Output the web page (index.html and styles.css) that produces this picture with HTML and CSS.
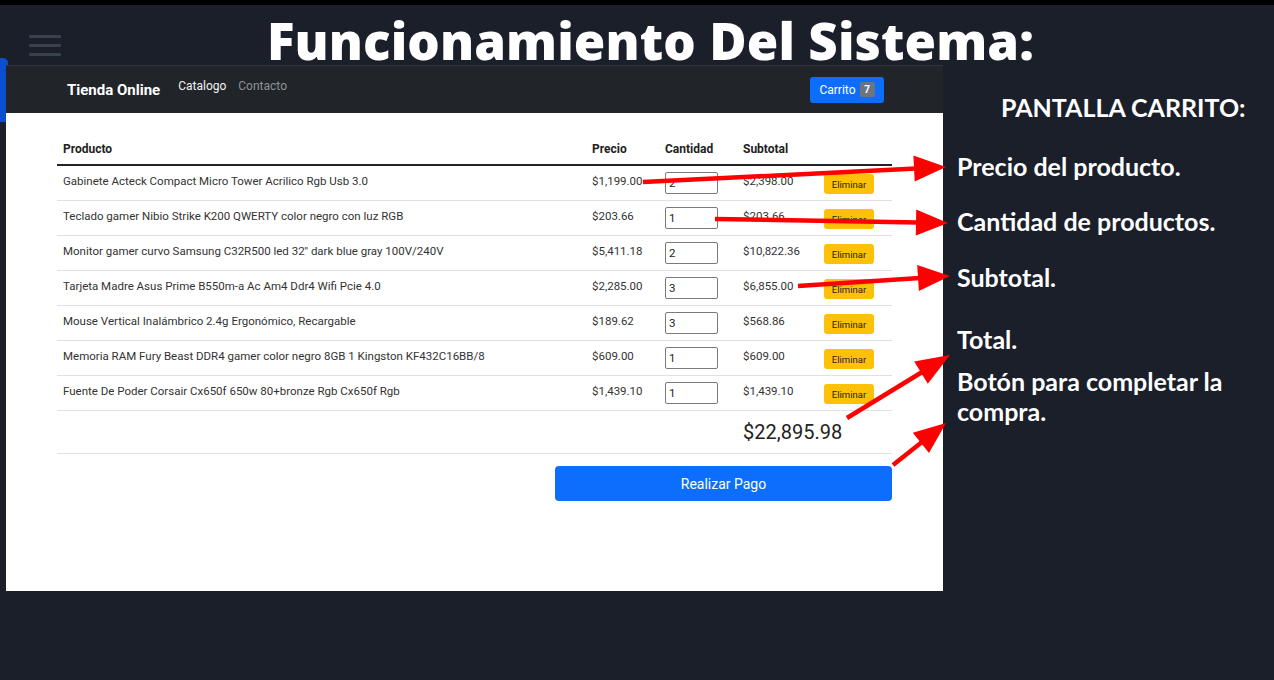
FILE: index.html
```html
<!DOCTYPE html>
<html lang="es">
<head>
<meta charset="utf-8">
<title>Funcionamiento Del Sistema</title>
<link rel="stylesheet" href="styles.css">
</head>
<body>
<div class="stage">
  <div class="topbar"></div>
  <header class="hero">
    <div class="burger"><span></span><span></span><span></span></div>
    <h1 class="title">Funcionamiento Del Sistema:</h1>
  </header>
  <div class="main">
    <div class="window">
      <nav class="nav">
        <span class="brand">Tienda Online</span>
        <div class="links">
          <span class="link active">Catalogo</span>
          <span class="link">Contacto</span>
        </div>
        <button class="cart-btn">Carrito <span class="badge">7</span></button>
      </nav>
      <div class="content">
        <table class="cart">
          <colgroup>
            <col class="col-prod"><col class="col-price"><col class="col-qty"><col class="col-sub"><col class="col-act">
          </colgroup>
          <thead>
            <tr><th>Producto</th><th>Precio</th><th>Cantidad</th><th>Subtotal</th><th></th></tr>
          </thead>
          <tbody>
            <tr><td>Gabinete Acteck Compact Micro Tower Acrilico Rgb Usb 3.0</td><td>$1,199.00</td><td><input class="qty" value="2"></td><td>$2,398.00</td><td><button class="del">Eliminar</button></td></tr>
            <tr><td>Teclado gamer Nibio Strike K200 QWERTY color negro con luz RGB</td><td>$203.66</td><td><input class="qty" value="1"></td><td>$203.66</td><td><button class="del">Eliminar</button></td></tr>
            <tr><td>Monitor gamer curvo Samsung C32R500 led 32'' dark blue gray 100V/240V</td><td>$5,411.18</td><td><input class="qty" value="2"></td><td>$10,822.36</td><td><button class="del">Eliminar</button></td></tr>
            <tr><td>Tarjeta Madre Asus Prime B550m-a Ac Am4 Ddr4 Wifi Pcie 4.0</td><td>$2,285.00</td><td><input class="qty" value="3"></td><td>$6,855.00</td><td><button class="del">Eliminar</button></td></tr>
            <tr><td>Mouse Vertical Inalámbrico 2.4g Ergonómico, Recargable</td><td>$189.62</td><td><input class="qty" value="3"></td><td>$568.86</td><td><button class="del">Eliminar</button></td></tr>
            <tr><td>Memoria RAM Fury Beast DDR4 gamer color negro 8GB 1 Kingston KF432C16BB/8</td><td>$609.00</td><td><input class="qty" value="1"></td><td>$609.00</td><td><button class="del">Eliminar</button></td></tr>
            <tr><td>Fuente De Poder Corsair Cx650f 650w 80+bronze Rgb Cx650f Rgb</td><td>$1,439.10</td><td><input class="qty" value="1"></td><td>$1,439.10</td><td><button class="del">Eliminar</button></td></tr>
            <tr class="total-row"><td colspan="3"></td><td colspan="2" class="total">$22,895.98</td></tr>
          </tbody>
        </table>
        <div class="pay-row"><button class="pay">Realizar Pago</button></div>
      </div>
    </div>
    <aside class="notes">
      <h2 class="notes-title">PANTALLA CARRITO:</h2>
      <p class="note n-precio">Precio del producto.</p>
      <p class="note n-cant">Cantidad de productos.</p>
      <p class="note n-sub">Subtotal.</p>
      <p class="note n-total">Total.</p>
      <p class="note n-btn">Botón para completar la compra.</p>
    </aside>
  </div>
  <div class="blue-tab"></div>
  <svg class="arrows" width="1274" height="680" viewBox="0 0 1274 680">
    <g fill="#ff0000" stroke="#ff0000">
      <line x1="643" y1="182" x2="916" y2="168.6" stroke-width="4.5"/>
      <polygon points="946,167 914.7,181.6 913.4,155.6" stroke="none"/>
      <line x1="715" y1="219" x2="918" y2="222.4" stroke-width="4.5"/>
      <polygon points="948,223 915.8,235.4 916.2,209.5" stroke="none"/>
      <line x1="798" y1="286" x2="920" y2="278" stroke-width="4.5"/>
      <polygon points="950,276 918.9,291.1 917.2,265.1" stroke="none"/>
      <line x1="847" y1="418" x2="923" y2="371.5" stroke-width="4.5"/>
      <polygon points="950,355 927.8,383.8 914.2,361.6" stroke="none"/>
      <line x1="893" y1="465" x2="922" y2="442" stroke-width="4.5"/>
      <polygon points="946,423 929,453.1 912.8,432.7" stroke="none"/>
    </g>
  </svg>
</div>
</body>
</html>
```
FILE: styles.css
```css
* { box-sizing: border-box; }
html, body { margin: 0; padding: 0; }
body {
  background: #1b1f2a;
  width: 1274px;
  height: 680px;
  overflow: hidden;
}
.stage {
  position: relative;
  width: 1274px;
  height: 680px;
  background: #1b1f2a;
}
.topbar { height: 5px; background: #000; }
.hero {
  height: 60px;
  display: flex;
  align-items: flex-start;
}
.burger {
  width: 32px;
  margin-left: 29px;
  padding-top: 30px;
  display: flex;
  flex-direction: column;
  gap: 6.5px;
}
.burger span {
  display: block;
  height: 2.5px;
  background: #394050;
  border-radius: 1px;
}
.title {
  flex: 1;
  margin: 0 34px 0 0;
  padding-top: 10px;
  line-height: 50px;
  text-align: center;
  color: #fff;
  font-family: "Open Sans", sans-serif;
  font-weight: 800;
  font-size: 51px;
  letter-spacing: 0.1px;
  white-space: nowrap;
}
.main {
  display: flex;
  align-items: flex-start;
}
.window {
  position: relative;
  z-index: 2;
  margin-left: 6px;
  width: 937px;
  height: 526px;
  background: #fff;
  font-family: Roboto, sans-serif;
  color: #333;
}
.nav {
  height: 48px;
  background: #212529;
  border-top: 1px solid #31353c;
  display: flex;
  align-items: center;
  padding: 0 59px 0 61px;
}
.brand {
  color: #fff;
  font-weight: 700;
  font-size: 15px;
}
.links {
  display: flex;
  gap: 12px;
  margin-left: 18px;
  margin-bottom: 7px;
}
.link { color: #8e9196; font-size: 12px; }
.link.active { color: #f2f2f2; }
.cart-btn {
  margin-left: auto;
  height: 26px;
  width: 74px;
  border: 0;
  border-radius: 3px;
  background: #0d6efd;
  color: #fff;
  font-family: Roboto, sans-serif;
  font-size: 12px;
  display: flex;
  align-items: center;
  justify-content: center;
  gap: 4px;
  padding: 0;
}
.badge {
  display: inline-block;
  background: #6c757d;
  color: #fff;
  font-weight: 700;
  font-size: 10px;
  width: 15px;
  height: 15px;
  line-height: 15px;
  text-align: center;
  border-radius: 2px;
}
.content {
  padding: 20px 51px 0 51px;
}
.cart {
  width: 835px;
  table-layout: fixed;
  border-collapse: collapse;
  font-size: 11.5px;
}
.col-prod { width: 529px; }
.col-price { width: 73px; }
.col-qty { width: 78px; }
.col-sub { width: 81px; }
.col-act { width: 74px; }
.cart th {
  text-align: left;
  font-weight: 700;
  font-size: 12px;
  color: #222;
  padding: 7px 6px 5px;
  line-height: 19px;
  border-bottom: 2px solid #212529;
}
.cart td {
  vertical-align: top;
  padding: 6px 6px;
  line-height: 18px;
  height: 34px;
  border-bottom: 1px solid #dee2e6;
  white-space: nowrap;
}
.qty {
  display: block;
  width: 53px;
  height: 22px;
  margin-top: 0;
  border: 1px solid #7a7a7a;
  border-radius: 2px;
  padding: 0 3px;
  font-family: Roboto, sans-serif;
  font-size: 11.5px;
  color: #222;
}
.del {
  display: block;
  margin-top: 2px;
  width: 50px;
  height: 20px;
  border: 0;
  border-radius: 3px;
  background: #ffc107;
  color: #222;
  font-family: Roboto, sans-serif;
  font-size: 9.5px;
  padding: 0;
}
.cart tr.total-row td {
  height: 43px;
  padding-top: 8px;
}
.cart td.total {
  font-size: 20px;
  line-height: 26px;
  color: #222;
}
.pay-row {
  width: 835px;
  display: flex;
  justify-content: flex-end;
  margin-top: 12px;
}
.pay {
  width: 337px;
  height: 35px;
  border: 0;
  border-radius: 4px;
  background: #0d6efd;
  color: #fff;
  font-family: Roboto, sans-serif;
  font-size: 14px;
}
.notes {
  flex: 1;
  padding: 27px 0 0 14px;
  color: #fff;
  font-family: Lato, sans-serif;
  font-weight: 700;
  font-size: 25px;
  line-height: 30px;
}
.notes-title {
  margin: 0 0 0 44px;
  font-size: 25px;
  font-weight: 700;
  line-height: 30px;
}
.note { margin: 0; }
.n-precio { margin-top: 29px; }
.n-cant { margin-top: 25px; }
.n-sub { margin-top: 26px; }
.n-total { margin-top: 32px; }
.n-btn { margin-top: 12px; width: 300px; }
.blue-tab {
  position: absolute;
  left: 0;
  top: 58px;
  width: 8px;
  height: 64px;
  background: #0b4fcf;
  border-top-right-radius: 5px;
  z-index: 1;
}
.arrows {
  position: absolute;
  left: 0;
  top: 0;
  z-index: 5;
  pointer-events: none;
}
```
